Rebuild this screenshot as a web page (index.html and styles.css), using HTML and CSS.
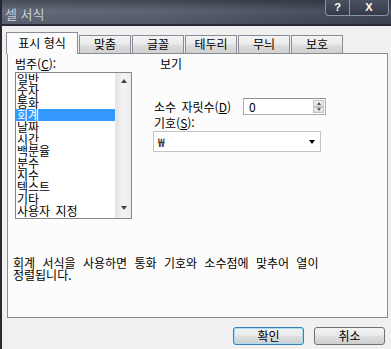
FILE: index.html
```html
<!DOCTYPE html>
<html lang="ko">
<head>
  <meta charset="UTF-8">
  <title>셀 서식</title>
  <link rel="stylesheet" href="styles.css">
</head>
<body>

  <div class="window">
    <!-- Title bar -->
    <div class="titlebar">
      <span class="title">셀 서식</span>
      <div class="caption-btns">
        <span class="cap help">?</span>
        <span class="cap close">X</span>
      </div>
    </div>

    <div class="content">
      <!-- Tabs -->
      <div class="tabs">
        <div class="tab active">표시 형식</div>
        <div class="tab">맞춤</div>
        <div class="tab">글꼴</div>
        <div class="tab">테두리</div>
        <div class="tab">무늬</div>
        <div class="tab">보호</div>
      </div>

      <div class="panel">
        <div class="top">
          <div class="category">
            <div class="label">범주(<u>C</u>):</div>
            <div class="listbox">
              <ul class="items">
                <li>일반</li>
                <li>숫자</li>
                <li>통화</li>
                <li class="selected">회계</li>
                <li>날짜</li>
                <li>시간</li>
                <li>백분율</li>
                <li>분수</li>
                <li>지수</li>
                <li>텍스트</li>
                <li>기타</li>
                <li>사용자 지정</li>
              </ul>
              <div class="scrollbar">
                <span class="arrow up"></span>
                <span class="arrow down"></span>
              </div>
            </div>
          </div>

          <div class="options">
            <div class="label view-label">보기</div>
            <div class="decimal-row">
              <span class="decimal-label">소수 자릿수(<u>D</u>)</span>
              <div class="spin">
                <span class="spin-value">0</span>
                <div class="spin-btns">
                  <span class="spin-btn"><span class="tri up"></span></span>
                  <span class="spin-btn"><span class="tri down"></span></span>
                </div>
              </div>
            </div>
            <div class="label">기호(<u>S</u>):</div>
            <div class="select">
              <span>₩</span>
              <span class="select-arrow"></span>
            </div>
          </div>
        </div>

        <p class="desc">회계 서식을 사용하면 통화 기호와 소수점에 맞추어 열이<br>정렬됩니다.</p>
      </div>

      <!-- Dialog buttons -->
      <div class="actions">
        <button class="btn default">확인</button>
        <button class="btn">취소</button>
      </div>
    </div>
  </div>

</body>
</html>
```

FILE: styles.css
```css
* {
  box-sizing: border-box;
}

body {
  margin: 0;
  font-family: "Noto Sans CJK KR", "Noto Sans", sans-serif;
  font-size: 12px;
  color: #000;
  background-color: #f0f0f0;
}

.window {
  width: 391px;
  height: 349px;
  background-color: #f0f0f0;
  border-left: 2px solid #262a33;
  overflow: hidden;
}

/* Title bar */
.titlebar {
  height: 26px;
  display: flex;
  align-items: flex-start;
  border-bottom: 2px solid #252a34;
  background:
    linear-gradient(180deg, rgba(0, 0, 0, 0.25) 0, rgba(255, 255, 255, 0.04) 45%, rgba(0, 0, 0, 0.06) 100%),
    linear-gradient(90deg, #5e6575 0%, #565d6d 40%, #454c5c 75%, #3b4252 100%);
}

.title {
  color: #c9cdd5;
  font-size: 13px;
  padding-left: 3px;
  margin-top: 7px;
  line-height: 14px;
}

.caption-btns {
  margin-left: auto;
  margin-right: 2px;
  display: flex;
  height: 16px;
  border: 1px solid #8d93a0;
  border-top: none;
  border-radius: 0 0 4px 4px;
  background: linear-gradient(#4a5160, #353b48);
}

.cap {
  color: #fff;
  font-family: "Liberation Sans", sans-serif;
  font-weight: bold;
  font-size: 11px;
  line-height: 15px;
  text-align: center;
}

.help {
  width: 23px;
}

.close {
  width: 39px;
  border-left: 1px solid #8d93a0;
}

/* Content area */
.content {
  padding: 6px 3px 0 5px;
}

.tabs {
  display: flex;
  align-items: flex-end;
  height: 22px;
  margin-bottom: -1px;
  position: relative;
  z-index: 1;
}

.tab {
  width: 52px;
  height: 18px;
  margin-left: 1px;
  margin-bottom: 1px;
  border: 1px solid #898c95;
  border-bottom: none;
  background: linear-gradient(#f3f3f3, #ebebeb 45%, #dddddd 55%, #d0d0d0);
  text-align: center;
  line-height: 16px;
}

.tab.active {
  width: 72px;
  height: 22px;
  margin-left: -1px;
  margin-bottom: 0;
  background: #fcfcfc;
  line-height: 20px;
}

.panel {
  width: 381px;
  height: 265px;
  border: 1px solid #898c95;
  background-color: #fcfcfc;
  padding: 2px 0 0 7px;
}

.top {
  display: flex;
}

.label {
  height: 16px;
  line-height: 16px;
}

.category {
  width: 117px;
}

/* Category list */
.listbox {
  display: flex;
  height: 147px;
  border: 1px solid #828790;
  background-color: #fff;
}

.items {
  list-style: none;
  margin: 0;
  padding: 0;
  flex: 1;
}

.items li {
  height: 12px;
  line-height: 12px;
  padding-left: 1px;
  white-space: nowrap;
  word-spacing: 2px;
}

.items li.selected {
  background-color: #3399ff;
  color: #fff;
}

.scrollbar {
  width: 16px;
  display: flex;
  flex-direction: column;
  justify-content: space-between;
  align-items: center;
  padding: 6px 0 8px;
  border-left: 1px solid #e8e8e8;
  background: linear-gradient(90deg, #e4e4e4, #f3f3f3 45%, #ececec);
}

.arrow {
  width: 0;
  height: 0;
  border-left: 3.5px solid transparent;
  border-right: 3.5px solid transparent;
}

.arrow.up {
  border-bottom: 4px solid #444;
}

.arrow.down {
  border-top: 4px solid #444;
}

/* Right side options */
.options {
  margin-left: 21px;
  width: 175px;
}

.options .label {
  padding-left: 1px;
}

.options .view-label {
  padding-left: 7px;
}

.decimal-row {
  display: flex;
  align-items: center;
  margin-top: 26px;
  height: 17px;
}

.decimal-label {
  width: 90px;
  padding-left: 1px;
  word-spacing: 2px;
}

.spin {
  display: flex;
  width: 83px;
  height: 17px;
  border: 1px solid #abadb3;
  border-top-color: #8f939b;
  background-color: #fff;
}

.spin-value {
  flex: 1;
  padding-left: 5px;
  line-height: 15px;
}

.spin-btns {
  width: 12px;
  display: flex;
  flex-direction: column;
  padding: 1px 1px 1px 0;
}

.spin-btn {
  flex: 1;
  display: flex;
  align-items: center;
  justify-content: center;
  border: 1px solid #c3c3c3;
  background: linear-gradient(#f4f4f4, #dcdcdc);
}

.tri {
  width: 0;
  height: 0;
  border-left: 2.5px solid transparent;
  border-right: 2.5px solid transparent;
}

.tri.up {
  border-bottom: 3px solid #555;
}

.tri.down {
  border-top: 3px solid #555;
}

.select {
  display: flex;
  align-items: center;
  width: 168px;
  height: 21px;
  padding: 0 5px 0 4px;
  border: 1px solid #c2c4ca;
  background-color: #fff;
}

.select-arrow {
  margin-left: auto;
  width: 0;
  height: 0;
  border-left: 3.5px solid transparent;
  border-right: 3.5px solid transparent;
  border-top: 4px solid #000;
}

.desc {
  margin: 38px 0 0 -2px;
  line-height: 12px;
  white-space: nowrap;
  word-spacing: 4px;
}

/* Buttons */
.actions {
  display: flex;
  justify-content: flex-end;
  gap: 10px;
  margin-top: 9px;
  padding-right: 3px;
}

.btn {
  width: 71px;
  height: 18px;
  padding: 0;
  font-family: inherit;
  font-size: 12px;
  line-height: 16px;
  color: #000;
  border: 1px solid #707070;
  border-radius: 3px;
  background: linear-gradient(#f2f2f2, #ebebeb 45%, #dddddd 55%, #cfcfcf);
}

.btn.default {
  border-color: #3c7fb1;
  box-shadow: inset 0 0 0 1px #a9dbf6;
}
```
